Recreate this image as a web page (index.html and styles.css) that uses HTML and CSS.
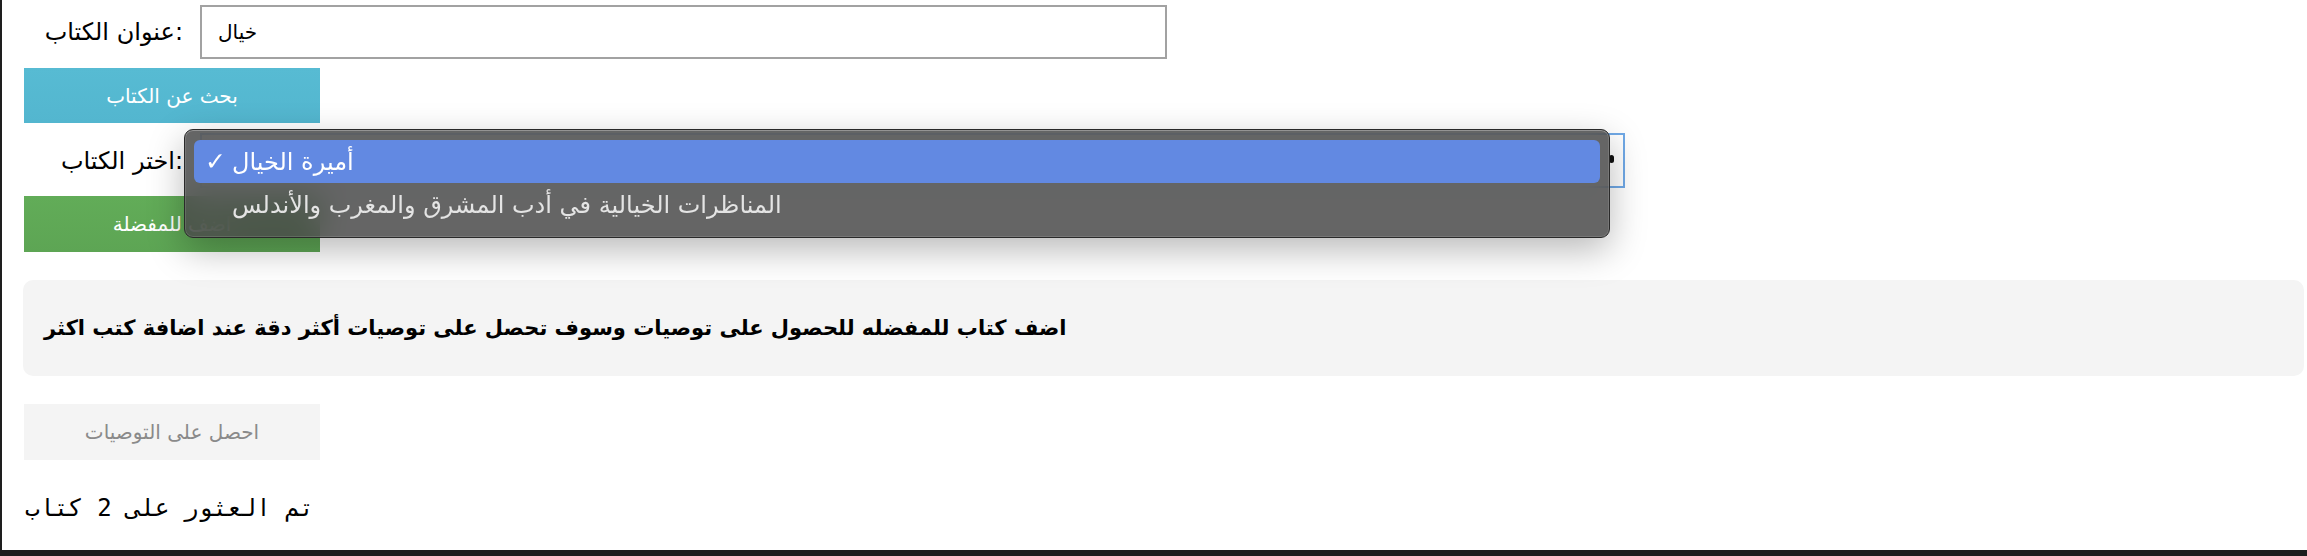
FILE: index.html
```html
<!DOCTYPE html>
<html lang="ar">
<head>
<meta charset="utf-8">
<title>توصيات الكتب</title>
<link rel="stylesheet" href="styles.css">
</head>
<body>
<div class="frame">
  <main class="page">
    <div class="field">
      <label class="label" for="title">عنوان الكتاب:</label>
      <input class="text-input" id="title" type="text" value="خيال">
    </div>
    <button class="btn btn-search">بحث عن الكتاب</button>
    <div class="field field-select">
      <label class="label">اختر الكتاب:</label>
      <div class="select">
        <span class="select-arrow"></span>
        <div class="menu">
          <div class="option option-selected"><span class="check">✓</span><span class="option-text">أميرة الخيال</span></div>
          <div class="option"><span class="check"></span><span class="option-text">المناظرات الخيالية في أدب المشرق والمغرب والأندلس</span></div>
        </div>
      </div>
    </div>
    <button class="btn btn-fav">اضف للمفضلة</button>
    <div class="info">اضف كتاب للمفضله للحصول على توصيات وسوف تحصل على توصيات أكثر دقة عند اضافة كتب اكثر</div>
    <button class="btn btn-rec">احصل على التوصيات</button>
    <p class="result">تم العثور على 2 كتاب</p>
  </main>
</div>
</body>
</html>
```

FILE: styles.css
```css
html, body {
  margin: 0;
  padding: 0;
  background: #ffffff;
}

body {
  font-family: "DejaVu Sans", "Noto Sans", sans-serif;
  color: #000;
}

.frame {
  height: 556px;
  box-sizing: border-box;
  border-left: 2px solid #1e1e1e;
  border-bottom: 6px solid #1e1e1e;
  overflow: hidden;
}

.page {
  display: flex;
  flex-direction: column;
  align-items: flex-start;
  padding: 5px 3px 0 21px;
}

.field {
  display: grid;
  grid-template-columns: 159px auto;
  column-gap: 17px;
  align-items: center;
  margin-left: 1px;
}

.label {
  justify-self: end;
  font-size: 24px;
  line-height: 1;
}

.text-input {
  width: 967px;
  height: 54px;
  box-sizing: border-box;
  border: 2px solid #a2a2a2;
  padding: 0 16px;
  font-family: "DejaVu Sans", sans-serif;
  font-size: 20px;
  color: #000;
  background: #fff;
  outline: none;
}

.btn {
  width: 296px;
  height: 55px;
  margin-left: 1px;
  border: none;
  font-family: "DejaVu Sans", sans-serif;
  font-size: 20px;
  color: #fff;
  padding: 0;
}

.btn-search {
  margin-top: 9px;
  background: linear-gradient(180deg, #57bbd3 0%, #53b6cf 100%);
}

.field-select {
  margin-top: 10px;
}

.select {
  position: relative;
  width: 1425px;
  height: 55px;
  box-sizing: border-box;
  border: 2px solid #70a9e7;
  background: #fff;
}

.select-arrow {
  position: absolute;
  right: 9px;
  top: 20px;
  width: 5px;
  height: 8px;
  border-radius: 3px;
  background: #111;
}

.menu {
  position: absolute;
  left: -18px;
  top: -6px;
  width: 1426px;
  height: 109px;
  box-sizing: border-box;
  padding: 10px 9px 9px;
  border: 1px solid #2a2a2a;
  border-radius: 9px;
  background: rgba(72, 72, 72, 0.84);
  -webkit-backdrop-filter: blur(16px);
  backdrop-filter: blur(16px);
  box-shadow: inset 0 1px 0 rgba(255, 255, 255, 0.22), inset 0 0 0 1px rgba(255, 255, 255, 0.12), 0 12px 36px rgba(0, 0, 0, 0.28);
  z-index: 5;
}

.option {
  display: flex;
  align-items: center;
  height: 44px;
  padding-left: 11px;
  border-radius: 6px;
  font-size: 24px;
  color: #e4e4e4;
}

.option-selected {
  height: 43px;
  background: #6289e2;
  color: #fff;
}

.check {
  width: 27px;
  font-size: 25px;
  font-weight: bold;
  line-height: 1;
}

.btn-fav {
  margin-top: 8px;
  height: 56px;
  background: linear-gradient(180deg, #62ac58 0%, #5da554 100%);
}

.info {
  align-self: stretch;
  margin-top: 28px;
  height: 96px;
  box-sizing: border-box;
  display: flex;
  align-items: center;
  padding: 0 15px 0 21px;
  border-radius: 10px;
  background: #f4f4f4;
  font-size: 21px;
  font-weight: bold;
}

.btn-rec {
  margin-top: 28px;
  height: 56px;
  background: #f4f4f4;
  color: #8a8a8a;
}

.result {
  margin: 33px 0 0 2px;
  font-family: "DejaVu Sans Mono", monospace;
  font-size: 24px;
  line-height: 30px;
}
```
